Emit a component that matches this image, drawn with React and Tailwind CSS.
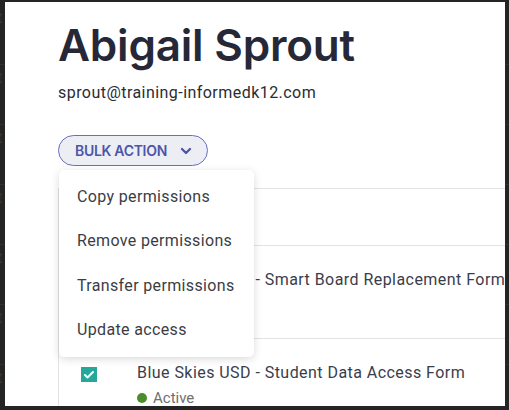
import { ChevronDown, Check } from "lucide-react";

const menuItems = ["Copy permissions", "Remove permissions", "Transfer permissions", "Update access"];

const rows = [
  { name: "Blue Skies USD - Smart Board Replacement Form", status: "Active" },
  { name: "Blue Skies USD - Student Data Access Form", status: "Active" },
];

export default function App() {
  return (
    <div className="relative w-[509px] h-[410px] overflow-hidden bg-[#242424] font-['Roboto',sans-serif]">
      {/* Page behind the modal */}
      <div className="flex flex-col pt-[5px]">
        {Array.from({ length: 7 }).map((_, i) => (
          <div key={i} className="h-[60px] border-b border-[#2f2f2f] pl-0 text-[17px] leading-[20px] text-[#3a3a3a] -ml-[3px]">
            <span className="block pt-[2px]">t</span>
          </div>
        ))}
      </div>

      {/* Modal panel */}
      <div className="absolute left-[5px] top-[2px] w-[500px] h-[404px] bg-white overflow-hidden">
        <div className="pl-[53px] pt-[17px]">
          <h1 className="font-['Inter',sans-serif] font-semibold text-[44px] leading-[52px] tracking-[-0.2px] text-[#262837]">
            Abigail Sprout
          </h1>
          <p className="mt-[12px] text-[16px] leading-[20px] tracking-[0.45px] text-[#2b2b33]">sprout@training-informedk12.com</p>

          <button className="mt-[32px] flex h-[31px] w-[150px] items-center gap-[11px] rounded-full border border-[#6470c4] bg-[#eceef4] pl-[16px] font-['Inter',sans-serif] text-[14px] font-semibold tracking-[-0.3px] text-[#4b56a8]">
            BULK ACTION
            <ChevronDown className="h-[16px] w-[16px]" strokeWidth={3.5} />
          </button>

          {/* Table */}
          <div className="mt-[22px] w-[480px] border-l border-t border-[#e3e3e3]">
            <div className="h-[57px] border-b border-[#e3e3e3]" />
            {rows.map((row) => (
              <div key={row.name} className="flex h-[93px] border-b border-[#e3e3e3] pt-[20px]">
                <div className="w-[78px] pl-[22px] pt-[8px]">
                  <span className="flex h-[15px] w-[16px] items-center justify-center bg-[#26a79b]">
                    <Check className="h-[12px] w-[12px] text-white" strokeWidth={4} />
                  </span>
                </div>
                <div className="flex flex-col">
                  <span className="whitespace-nowrap text-[16px] leading-[28px] tracking-[0.45px] text-[#3a3d4c]">{row.name}</span>
                  <span className="mt-[2px] flex items-center gap-[6px] text-[15px] leading-[18px] text-[#6f6f6f]">
                    <span className="h-[10px] w-[10px] rounded-full bg-[#4d8c2a]" />
                    {row.status}
                  </span>
                </div>
              </div>
            ))}
          </div>
        </div>

        {/* Dropdown menu */}
        <div className="absolute left-[54px] top-[168px] w-[195px] rounded-[5px] bg-white py-[5px] shadow-[0_2px_8px_rgba(0,0,0,0.15)]">
          {menuItems.map((item) => (
            <div key={item} className="flex h-[44.3px] items-center pl-[18px] text-[16px] tracking-[0.35px] text-[#3b3d45]">
              {item}
            </div>
          ))}
        </div>
      </div>
    </div>
  );
}
